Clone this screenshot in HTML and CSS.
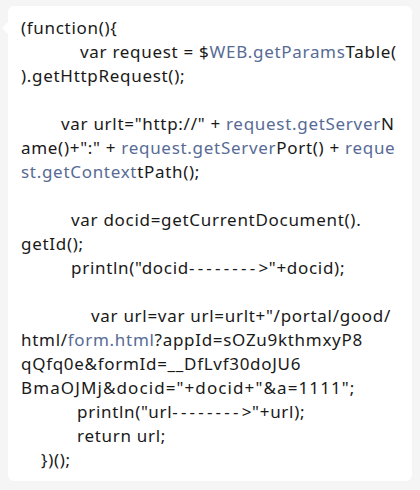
FILE: index.html
```html
<!DOCTYPE html>
<html>
<head>
<meta charset="utf-8">
<link rel="stylesheet" href="styles.css">
</head>
<body>
<div class="chat">
  <div class="bubble">
    <div class="code">
      <div class="ln">(function(){</div>
      <div class="ln i-req">var request = $<span class="lk">WEB.getParams</span>Table(</div>
      <div class="ln">).getHttpRequest();</div>
      <div class="ln blank"></div>
      <div class="ln i-urlt">var urlt="http://" + <span class="lk">request.getServer</span>N</div>
      <div class="ln">ame()+":" + <span class="lk">request.getServer</span>Port() + <span class="lk">reque</span></div>
      <div class="ln"><span class="lk">st.getContext</span>tPath();</div>
      <div class="ln blank"></div>
      <div class="ln i-doc">var docid=getCurrentDocument().</div>
      <div class="ln">getId();</div>
      <div class="ln i-doc">println("docid<span class="dash">--------</span>&gt;"+docid);</div>
      <div class="ln blank"></div>
      <div class="ln i-url">var url=var url=urlt+"/portal/good/</div>
      <div class="ln">html/<span class="lk">form.html</span>?appId=sOZu9kthmxyP8</div>
      <div class="ln">qQfq0e&amp;formId=__DfLvf30doJU6</div>
      <div class="ln wide">BmaOJMj&amp;docid="+docid+"&amp;a=1111";</div>
      <div class="ln i-ret">println("url<span class="dash">--------</span>&gt;"+url);</div>
      <div class="ln i-ret">return url;</div>
      <div class="ln i-end">})();</div>
    </div>
  </div>
</div>
</body>
</html>
```

FILE: styles.css
```css
html, body {
  margin: 0;
  padding: 0;
  background: #f5f5f5;
}
.chat {
  padding: 6px 8px 9px 8px;
}
.bubble {
  position: relative;
  background: #ffffff;
  border-radius: 6px;
  padding: 10px 0 10px 13px;
  height: 455px;
}
.bubble::before {
  content: "";
  position: absolute;
  left: -6px;
  top: 16px;
  border-top: 6px solid transparent;
  border-bottom: 6px solid transparent;
  border-right: 6px solid #ffffff;
}
.code {
  font-family: "Noto Sans", "Open Sans", sans-serif;
  font-size: 17px;
  letter-spacing: 0.7px;
  line-height: 24px;
  color: #191919;
}
.ln {
  white-space: pre;
  height: 24px;
}
.lk { color: #576b95; }
.dash { letter-spacing: 3.2px; }
.wide { letter-spacing: 1.1px; }
.i-req { padding-left: 59px; }
.i-urlt { padding-left: 40px; }
.i-doc { padding-left: 50px; }
.i-url { padding-left: 70px; }
.i-ret { padding-left: 56px; }
.i-end { padding-left: 20px; }
```
